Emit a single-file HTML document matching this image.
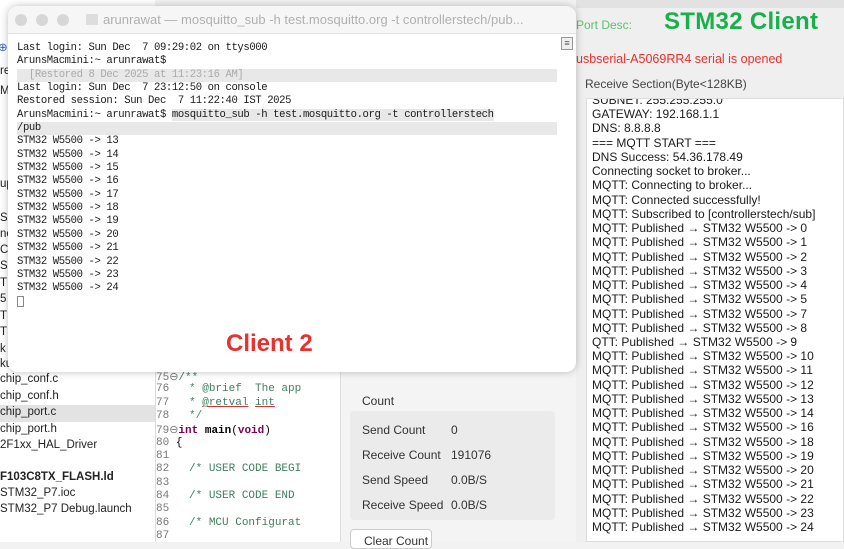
<!DOCTYPE html>
<html><head><meta charset="utf-8"><style>
*{margin:0;padding:0;box-sizing:border-box}
body{width:844px;height:542px;overflow:hidden;background:#f2f2f2;font-family:"Liberation Sans",sans-serif;position:relative}
.abs{position:absolute}
.side{left:0;top:0;width:155px;height:542px;background:#fff;font-size:11.5px;color:#222}
.side div{position:absolute;left:0;white-space:nowrap}
.editor{left:155px;top:360px;width:185px;height:182px;background:#fff;border-left:1px solid #ddd;font-family:"Liberation Mono",monospace;font-size:11px;color:#3f7f5f}
.editor div{position:absolute;left:0;white-space:pre;height:13px}
.ln{color:#787878}
.right{left:576px;top:0;width:268px;height:542px;background:#efefef}
.recv{left:586px;top:98px;width:258px;height:444px;background:#fff;border:1px solid #ddd;font-size:12px;color:#1a1a1a;padding:0 0 0 5px;overflow:hidden}
.recv div{height:14.24px;line-height:14.24px;white-space:nowrap}
.mid{left:340px;top:360px;width:236px;height:182px;background:#f4f4f4;border-left:1px solid #ddd}
.term{left:8px;top:6px;width:568px;height:366px;background:#fff;border-radius:10px;box-shadow:0 0 8px rgba(0,0,0,.25);overflow:hidden}
.tbar{height:28px;background:#f6f6f6;border-bottom:1px solid #e4e4e4;position:relative}
.dot{position:absolute;top:8px;width:12px;height:12px;border-radius:50%;background:#d7d7d7}
.tl{position:absolute;left:9px;top:36px;font-family:"Liberation Mono",monospace;font-size:10.6px;color:#1a1a1a}
.tl div{height:13.35px;line-height:13.35px;white-space:pre;letter-spacing:-0.4px}
.hl{background:#e8e8e8}
</style></head><body>
<div class="abs side">
<div style="top:40px;left:-2px;color:#3366cc">⊕</div>
<div style="top:65px">re</div><div style="top:85px">M3</div>
<div style="top:178px">up</div><div style="top:212px">S</div><div style="top:228px">ne</div><div style="top:244px">C</div><div style="top:260px">S</div><div style="top:277px">T</div><div style="top:293px">5</div><div style="top:310px">T</div><div style="top:326px">T</div><div style="top:343px">k</div><div style="top:358px">ku</div>
<div style="top:373px">chip_conf.c</div>
<div style="top:390px">chip_conf.h</div>
<div style="top:405px;width:155px;height:17px;background:#e3e3e3;padding-top:1px">chip_port.c</div>
<div style="top:423px">chip_port.h</div>
<div style="top:439px">2F1xx_HAL_Driver</div>
<div style="top:471px;font-weight:bold">F103C8TX_FLASH.ld</div>
<div style="top:487px">STM32_P7.ioc</div>
<div style="top:503px">STM32_P7 Debug.launch</div>
</div>
<div class="abs editor">
<div style="top:10px"><span class="ln">75⊖</span>/**</div>
<div style="top:23px"><span class="ln">76 </span>  * @brief  The app</div>
<div style="top:37px"><span class="ln">77 </span>  * <u style="text-decoration-color:#c33">@retval</u> <u style="text-decoration-color:#c33">int</u></div>
<div style="top:50px"><span class="ln">78 </span>  */</div>
<div style="top:63px;color:#000"><span class="ln">79⊖</span><b style="color:#7f0055">int</b> <b>main</b>(<b style="color:#7f0055">void</b>)</div>
<div style="top:77px;color:#000"><span class="ln">80 </span>{</div>
<div style="top:90px"><span class="ln">81</span></div>
<div style="top:103px"><span class="ln">82 </span>  /* USER CODE BEGI</div>
<div style="top:117px"><span class="ln">83</span></div>
<div style="top:130px"><span class="ln">84 </span>  /* USER CODE END </div>
<div style="top:143px"><span class="ln">85</span></div>
<div style="top:157px"><span class="ln">86 </span>  /* MCU Configurat</div>
<div style="top:170px"><span class="ln">87</span></div>
</div>
<div class="abs mid">
<div class="abs" style="left:21px;top:34px;font-size:12px;color:#333">Count</div>
<div class="abs" style="left:9px;top:51px;width:205px;height:109px;background:#ebebeb;border-radius:4px;font-size:12px;color:#333">
<div class="abs" style="left:12px;top:12px">Send Count</div><div class="abs" style="left:101px;top:12px">0</div>
<div class="abs" style="left:12px;top:37px">Receive Count</div><div class="abs" style="left:101px;top:37px">191076</div>
<div class="abs" style="left:12px;top:62px">Send Speed</div><div class="abs" style="left:101px;top:62px">0.0B/S</div>
<div class="abs" style="left:12px;top:87px">Receive Speed</div><div class="abs" style="left:101px;top:87px">0.0B/S</div>
</div>
<div class="abs" style="left:9px;top:169px;width:82px;height:20px;background:#fff;border:1px solid #ccc;border-radius:4px;font-size:12px;color:#333;padding:4px 0 0 13px">Clear Count</div>
</div>
<div class="abs right">
<div class="abs" style="left:0;top:0;width:268px;height:8px;background:#e2e2e2"></div>
<div class="abs" style="left:0;top:18px;font-size:12px;color:#5fbf6f">Port Desc:</div>
<div class="abs" style="left:88px;top:8px;font-size:24px;font-weight:bold;color:#18b04a;letter-spacing:0.3px">STM32 Client</div>
<div class="abs" style="left:0;top:52px;font-size:12.5px;color:#e8302c">usbserial-A5069RR4 serial is opened</div>
<div class="abs" style="left:9px;top:77px;font-size:12px;color:#444">Receive Section(Byte&lt;128KB)</div>
</div>
<div class="abs recv">
<div style="margin-top:-6px">SUBNET: 255.255.255.0</div>
<div>GATEWAY: 192.168.1.1</div>
<div>DNS: 8.8.8.8</div>
<div>=== MQTT START ===</div>
<div>DNS Success: 54.36.178.49</div>
<div>Connecting socket to broker...</div>
<div>MQTT: Connecting to broker...</div>
<div>MQTT: Connected successfully!</div>
<div>MQTT: Subscribed to [controllerstech/sub]</div>
<div>MQTT: Published → STM32 W5500 -&gt; 0</div>
<div>MQTT: Published → STM32 W5500 -&gt; 1</div>
<div>MQTT: Published → STM32 W5500 -&gt; 2</div>
<div>MQTT: Published → STM32 W5500 -&gt; 3</div>
<div>MQTT: Published → STM32 W5500 -&gt; 4</div>
<div>MQTT: Published → STM32 W5500 -&gt; 5</div>
<div>MQTT: Published → STM32 W5500 -&gt; 7</div>
<div>MQTT: Published → STM32 W5500 -&gt; 8</div>
<div>QTT: Published → STM32 W5500 -&gt; 9</div>
<div>MQTT: Published → STM32 W5500 -&gt; 10</div>
<div>MQTT: Published → STM32 W5500 -&gt; 11</div>
<div>MQTT: Published → STM32 W5500 -&gt; 12</div>
<div>MQTT: Published → STM32 W5500 -&gt; 13</div>
<div>MQTT: Published → STM32 W5500 -&gt; 14</div>
<div>MQTT: Published → STM32 W5500 -&gt; 16</div>
<div>MQTT: Published → STM32 W5500 -&gt; 18</div>
<div>MQTT: Published → STM32 W5500 -&gt; 19</div>
<div>MQTT: Published → STM32 W5500 -&gt; 20</div>
<div>MQTT: Published → STM32 W5500 -&gt; 21</div>
<div>MQTT: Published → STM32 W5500 -&gt; 22</div>
<div>MQTT: Published → STM32 W5500 -&gt; 23</div>
<div>MQTT: Published → STM32 W5500 -&gt; 24</div>
</div>
<div class="abs term">
<div class="tbar">
<div class="dot" style="left:7px"></div><div class="dot" style="left:28px"></div><div class="dot" style="left:49px"></div>
<div style="position:absolute;left:78px;top:8px;width:12px;height:11px;background:#ddd"></div>
<div style="position:absolute;left:95px;top:6px;font-size:13px;color:#b0b0b0;white-space:nowrap">arunrawat — mosquitto_sub -h test.mosquitto.org -t controllerstech/pub...</div>
</div>
<div style="position:absolute;left:553px;top:31px;width:12px;height:13px;border:1px solid #999;background:#eee;font-size:9px;line-height:10px;text-align:center;color:#555">≡</div>
<div class="tl">
<div>Last login: Sun Dec  7 09:29:02 on ttys000</div>
<div>ArunsMacmini:~ arunrawat$</div>
<div class="hl" style="color:#aaa;width:540px">  [Restored 8 Dec 2025 at 11:23:16 AM]</div>
<div>Last login: Sun Dec  7 23:12:50 on console</div>
<div>Restored session: Sun Dec  7 11:22:40 IST 2025</div>
<div>ArunsMacmini:~ arunrawat$ <span class="hl">mosquitto_sub -h test.mosquitto.org -t controllerstech</span></div>
<div class="hl" style="width:540px">/pub</div>
<div>STM32 W5500 -&gt; 13</div>
<div>STM32 W5500 -&gt; 14</div>
<div>STM32 W5500 -&gt; 15</div>
<div>STM32 W5500 -&gt; 16</div>
<div>STM32 W5500 -&gt; 17</div>
<div>STM32 W5500 -&gt; 18</div>
<div>STM32 W5500 -&gt; 19</div>
<div>STM32 W5500 -&gt; 20</div>
<div>STM32 W5500 -&gt; 21</div>
<div>STM32 W5500 -&gt; 22</div>
<div>STM32 W5500 -&gt; 23</div>
<div>STM32 W5500 -&gt; 24</div>
<div><span style="display:inline-block;width:7px;height:11px;border:1px solid #888;vertical-align:middle"></span></div>
</div>
<div style="position:absolute;left:218px;top:324px;font-size:24px;font-weight:bold;color:#e8302c">Client 2</div>
</div>
</body></html>
